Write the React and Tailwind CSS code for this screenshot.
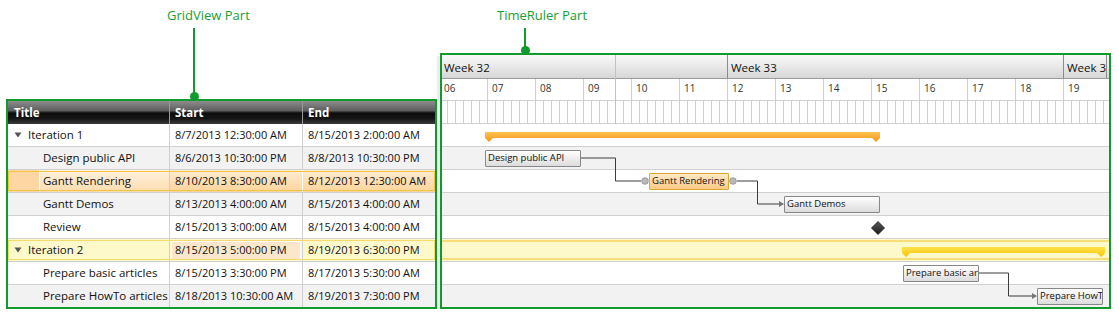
import React from 'react';

// timeline scale: 48px per day, 2px per hour, origin = Aug 6 00:00 at x=440 (inner box starts at 442)
const DAY_W = 48;
const HOUR_W = 2;
const ROW_H = 23;
const x = ([day, hour]) => (day - 6) * DAY_W + hour * HOUR_W - 2;

const rows = [
  { title: 'Iteration 1', start: '8/7/2013 12:30:00 AM', end: '8/15/2013 2:00:00 AM', kind: 'summary', color: 'orange', s: [7, 0.5], e: [15, 2] },
  { title: 'Design public API', start: '8/6/2013 10:30:00 PM', end: '8/8/2013 10:30:00 PM', kind: 'task', s: [6, 22.5], e: [8, 22.5] },
  { title: 'Gantt Rendering', start: '8/10/2013 8:30:00 AM', end: '8/12/2013 12:30:00 AM', kind: 'task', selected: true, s: [10, 8.5], e: [12, 0.5] },
  { title: 'Gantt Demos', start: '8/13/2013 4:00:00 AM', end: '8/15/2013 4:00:00 AM', kind: 'task', s: [13, 4], e: [15, 4] },
  { title: 'Review', start: '8/15/2013 3:00:00 AM', end: '8/15/2013 4:00:00 AM', kind: 'milestone', s: [15, 3], e: [15, 4] },
  { title: 'Iteration 2', start: '8/15/2013 5:00:00 PM', end: '8/19/2013 6:30:00 PM', kind: 'summary', color: 'yellow', current: true, s: [15, 17], e: [19, 18.5] },
  { title: 'Prepare basic articles', start: '8/15/2013 3:30:00 PM', end: '8/17/2013 5:30:00 AM', kind: 'task', s: [15, 15.5], e: [17, 5.5] },
  { title: 'Prepare HowTo articles', start: '8/18/2013 10:30:00 AM', end: '8/19/2013 7:30:00 PM', kind: 'task', s: [18, 10.5], e: [19, 19.5] },
];

// from row, to row, x of the vertical segment
const links = [
  { from: 1, to: 2, via: 173 },
  { from: 2, to: 3, via: 315 },
  { from: 6, to: 7, via: 566 },
];

const days = ['06', '07', '08', '09', '10', '11', '12', '13', '14', '15', '16', '17', '18', '19'];

const Expander = () => (
  <svg width="8" height="6" viewBox="0 0 8 6" className="shrink-0">
    <path d="M0.5 0.5 H7.5 L4 5.5 Z" fill="#555" />
  </svg>
);

function SummaryBar({ left, width, color }) {
  const w = width + 8;
  const id = `summary-${color}`;
  const stops = color === 'orange' ? ['#fdc24e', '#f5961a'] : ['#ffe24f', '#fbc400'];
  return (
    <svg className="absolute top-[8px]" style={{ left: left - 4 }} width={w} height={11}>
      <defs>
        <linearGradient id={id} x1="0" y1="0" x2="0" y2="1">
          <stop offset="0" stopColor={stops[0]} />
          <stop offset="1" stopColor={stops[1]} />
        </linearGradient>
      </defs>
      <path d={`M0 0H${w}V6L${w - 4} 10L${w - 8} 6H8L4 10L0 6Z`} fill={`url(#${id})`} />
    </svg>
  );
}

function GridRow({ row, index }) {
  const odd = index % 2 === 1;
  const child = row.kind !== 'summary';

  if (row.selected) {
    return (
      <div className="relative flex h-[23px] border-b border-[#d0d0d0] bg-white">
        <div className="flex w-[162px] border-r border-[#d0d0d0]">
          <div className="w-[31px] bg-[#fdd6a4]" />
          <div className="flex flex-1 items-center border-l border-white bg-[linear-gradient(#fff2df,#fddcae)] pl-[3px] text-[11.5px]">
            {row.title}
          </div>
        </div>
        <div className="flex w-[133px] items-center border-r border-white bg-[linear-gradient(#fdecd2,#fcd49b)] pl-[5px] text-[11px]">
          {row.start}
        </div>
        <div className="flex flex-1 items-center bg-[linear-gradient(#fdecd2,#fcd49b)] pl-[5px] text-[11px]">
          {row.end}
        </div>
        <div className="pointer-events-none absolute inset-x-0 top-[1px] bottom-[1px] border border-[#f5c542]" />
      </div>
    );
  }

  const bg = row.current ? 'bg-[#fdf9cb]' : odd ? 'bg-[#f2f2f2]' : 'bg-white';
  return (
    <div className={`relative flex h-[23px] border-b border-[#d0d0d0] ${bg}`}>
      <div className={`flex w-[162px] items-center gap-[6px] border-r border-[#d0d0d0] text-[11.5px] ${child ? 'pl-[35px]' : 'pl-[6px]'}`}>
        {!child && <Expander />}
        <span className="whitespace-nowrap">{row.title}</span>
      </div>
      <div className="flex w-[133px] items-center border-r border-[#d0d0d0] pl-[5px] text-[11px] whitespace-nowrap">
        {row.current ? (
          <div className="-ml-[4px] flex h-[19px] w-[130px] items-center border border-white bg-[#fde7ca] pl-[3px]">{row.start}</div>
        ) : (
          row.start
        )}
      </div>
      <div className="flex flex-1 items-center pl-[5px] text-[11px] whitespace-nowrap">{row.end}</div>
      {row.current && (
        <div className="pointer-events-none absolute inset-x-0 top-[1px] bottom-[1px] border border-[#f7d96c]" />
      )}
    </div>
  );
}

function GanttRow({ row, index }) {
  const odd = index % 2 === 1;
  const bg = row.current ? 'bg-[#fdf9cb]' : odd ? 'bg-[#f2f2f2]' : 'bg-white';
  const left = x(row.s);
  const width = x(row.e) - left;

  return (
    <div className={`relative h-[23px] border-b border-[#d0d0d0] ${bg}`}>
      {row.current && (
        <div className="pointer-events-none absolute inset-x-0 top-[1px] bottom-[1px] border-y-2 border-[#f8de7a]" />
      )}
      {row.kind === 'summary' && <SummaryBar left={left} width={width} color={row.color} />}
      {row.kind === 'task' && (
        <div
          className={`absolute top-[3px] flex h-[17px] items-center overflow-hidden rounded-[1px] border pl-[2px] text-[9.5px] whitespace-nowrap ${
            row.selected
              ? 'border-[#dca936] bg-[linear-gradient(#ffe9c6,#fcca85)]'
              : 'border-[#888] bg-[linear-gradient(#ffffff,#dcdcdc)]'
          }`}
          style={{ left, width }}
        >
          {row.title}
        </div>
      )}
      {row.kind === 'milestone' && (
        <svg className="absolute top-[5px]" style={{ left: left - 7 }} width="14" height="14" viewBox="0 0 14 14">
          <defs>
            <linearGradient id="ms" x1="0" y1="0" x2="0" y2="1">
              <stop offset="0" stopColor="#5a5a5a" />
              <stop offset="1" stopColor="#1c1c1c" />
            </linearGradient>
          </defs>
          <path d="M7 0.5 L13.5 7 L7 13.5 L0.5 7 Z" fill="url(#ms)" stroke="#111" strokeWidth="0.8" />
        </svg>
      )}
    </div>
  );
}

function Links() {
  const mid = (i) => i * ROW_H + 11.5;
  return (
    <svg className="pointer-events-none absolute inset-0" width="667" height="184">
      {links.map((l, i) => {
        const a = rows[l.from];
        const b = rows[l.to];
        const x1 = x(a.e) + (a.selected ? 8 : 0);
        const x2 = x(b.s) - (b.selected ? 8 : 0);
        const y1 = mid(l.from) - 0.5;
        const y2 = mid(l.to) - 0.5;
        return (
          <g key={i}>
            <path d={`M${x1} ${y1}H${l.via + 0.5}V${y2}H${x2 - (b.selected ? 0 : 1)}`} fill="none" stroke="#3c3c3c" strokeWidth="1" />
            {!b.selected && <path d={`M${x2 - 5} ${y2 - 3}L${x2} ${y2}L${x2 - 5} ${y2 + 3}Z`} fill="#777" />}
          </g>
        );
      })}
      {(() => {
        const r = rows[2];
        const y = mid(2) - 0.5;
        return (
          <g fill="#b9b9b9" stroke="#8f8f8f" strokeWidth="0.8">
            <circle cx={x(r.s) - 4} cy={y} r="3.3" />
            <circle cx={x(r.e) + 4} cy={y} r="3.3" />
          </g>
        );
      })()}
    </svg>
  );
}

export default function App() {
  const green = 'border-[#109b2c]';
  return (
    <div className="relative h-[316px] w-[1119px] overflow-hidden bg-white font-['Open_Sans',sans-serif] text-[#111]">
      {/* callouts */}
      <div className="absolute left-[167px] top-[5px] text-[13px] leading-[20px] text-[#17a033]">GridView Part</div>
      <div className="absolute left-[193px] top-[28px] h-[66px] w-[2px] bg-[#109b2c]" />
      <div className="absolute left-[190px] top-[92px] z-10 h-[9px] w-[9px] rounded-full bg-[#109b2c]" />
      <div className="absolute left-[497px] top-[5px] text-[13px] leading-[20px] text-[#17a033]">TimeRuler Part</div>
      <div className="absolute left-[524px] top-[28px] h-[20px] w-[2px] bg-[#109b2c]" />
      <div className="absolute left-[521px] top-[46px] z-10 h-[9px] w-[9px] rounded-full bg-[#109b2c]" />

      <div className="flex pl-[6px]">
        {/* grid */}
        <div className="pt-[99px]">
          <div className={`h-[210px] w-[431px] overflow-hidden border-2 ${green}`}>
            <div className="flex h-[23px] bg-[linear-gradient(#8d8d8d_0%,#5e5e5e_42%,#0c0c0c_52%,#141414_75%,#3a3a3a_100%)] text-[11.5px] font-bold text-white">
              <div className="flex w-[162px] items-center border-r border-[#9a9a9a] pl-[6px]">Title</div>
              <div className="flex w-[133px] items-center border-r border-[#9a9a9a] pl-[5px]">Start</div>
              <div className="flex flex-1 items-center pl-[5px]">End</div>
            </div>
            {rows.map((r, i) => (
              <GridRow key={i} row={r} index={i} />
            ))}
          </div>
        </div>

        {/* splitter */}
        <div className="mt-[56px] w-[3px] bg-[#ececec]" />

        {/* timeline */}
        <div className="pt-[53px]">
          <div className={`h-[256px] w-[671px] overflow-hidden border-2 ${green}`}>
            <div className="relative">
              <div className="flex h-[24px] border-b border-[#9a9a9a] bg-[linear-gradient(#f9f9f9,#e9e9e9_50%,#d6d6d6)] text-[11.5px] whitespace-nowrap">
                <div className="flex w-[286px] shrink-0 items-center border-r border-[#8c8c8c] pl-[2px] pt-[2px]">Week 32</div>
                <div className="flex w-[336px] shrink-0 items-center border-r border-[#8c8c8c] pl-[3px] pt-[2px]">Week 33</div>
                <div className="flex w-[43px] shrink-0 items-center overflow-hidden border-r border-[#8c8c8c] pl-[3px] pt-[2px]">Week 34</div>
              </div>
              <div className="-ml-[2px] flex h-[22px] border-b border-[#cfcfcf] text-[10px] text-[#333]">
                {days.map((d) => (
                  <div key={d} className="w-[48px] shrink-0 border-r border-[#cfcfcf] pl-[4px] pt-[2px] leading-[14px]">
                    {d}
                  </div>
                ))}
              </div>
              <div className="-ml-[2px] flex h-[23px] border-b border-[#cfcfcf]">
                {Array.from({ length: 84 }, (_, i) => (
                  <div key={i} className="w-[8px] shrink-0 border-r border-[#cfcfcf]" />
                ))}
              </div>
              <div className="absolute left-[173px] top-0 h-[69px] w-px bg-[#f3bf45]" />
            </div>
            <div className="relative">
              {rows.map((r, i) => (
                <GanttRow key={i} row={r} index={i} />
              ))}
              <Links />
            </div>
          </div>
        </div>
      </div>
    </div>
  );
}
